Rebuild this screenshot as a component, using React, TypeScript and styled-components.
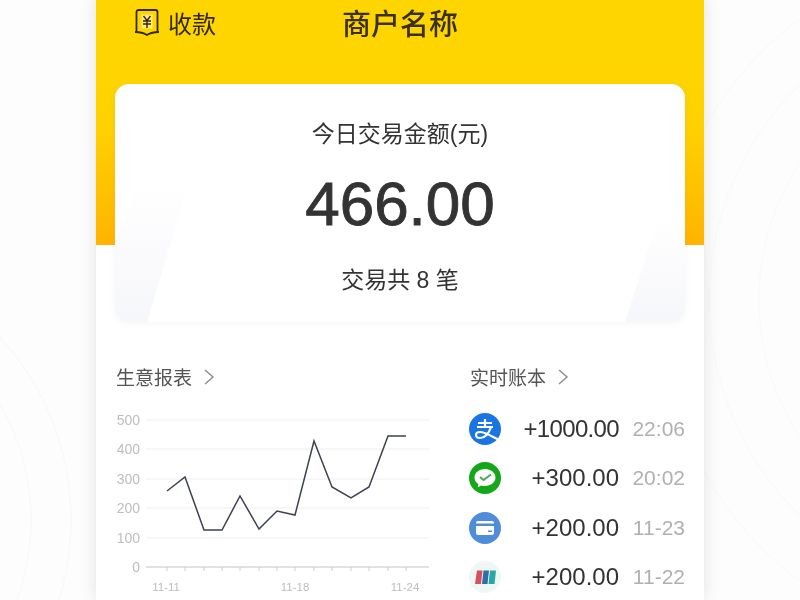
import React from 'react';
import styled, { createGlobalStyle } from 'styled-components';

const GlobalStyle = createGlobalStyle`
  html, body {
    margin: 0;
    padding: 0;
    width: 800px;
    height: 600px;
    overflow: hidden;
  }
  body {
    font-family: "Liberation Sans", "Noto Sans CJK SC", sans-serif;
    background:
      radial-gradient(circle at 1010px 300px, transparent 0 250px, #fafafb 250.500px 251.500px, transparent 252px 300px, #fafafb 300.500px 301.500px, transparent 302px 350px, #fafafb 350.500px 351.500px, transparent 352px),
      radial-gradient(circle at -200px 520px, transparent 0 230px, #f9f9fa 230.500px 231.500px, transparent 232px 270px, #f9f9fa 270.500px 271.500px, transparent 272px),
      #fdfdfd;
  }
`;

const Phone = styled.div`
  width: 608px;
  height: 600px;
  margin-left: 96px;
  background: #fff;
  overflow: hidden;
  box-shadow: 0 0 16px rgba(60, 60, 80, 0.14);
  filter: blur(0.6px);
`;

const Hero = styled.section`
  background: linear-gradient(180deg, #ffd500 0, #ffd500 70px, #ffd000 130px, #ffb400 245px) top / 100% 245px no-repeat;
  padding-bottom: 20px;
`;

const TopBar = styled.header`
  display: grid;
  grid-template-columns: 1fr auto 1fr;
  align-items: center;
  height: 44px;
  padding: 0 38px;
  margin-bottom: 40px;
  color: #33291a;
`;

const Collect = styled.div`
  display: flex;
  align-items: center;
  gap: 8px;
  font-size: 24px;
`;

const Title = styled.h1`
  margin: 0;
  font-size: 29px;
  font-weight: 500;
  color: #3a3020;
`;

const Card = styled.div`
  position: relative;
  margin: 0 19px;
  height: 238px;
  border-radius: 14px;
  background: #fff;
  box-shadow: 0 1px 6px rgba(120, 120, 140, 0.07);
  overflow: hidden;
  display: flex;
  flex-direction: column;
  align-items: center;
  color: #333;

  &::before,
  &::after {
    content: '';
    position: absolute;
    background: linear-gradient(0deg, #f6f7fa 0, #fbfbfd 55%, #fff 95%);
  }
  &::before {
    left: 0;
    bottom: 0;
    width: 75px;
    height: 145px;
    clip-path: polygon(33% 0, 100% 0, 43% 100%, 0 100%, 0 45%);
  }
  &::after {
    right: 0;
    bottom: 0;
    width: 60px;
    height: 108px;
    clip-path: polygon(58% 0, 100% 15%, 100% 100%, 0 100%);
  }
`;

const CardLabel = styled.div<{ $top: number }>`
  position: relative;
  z-index: 1;
  margin-top: ${p => p.$top}px;
  font-size: 23px;
  line-height: 30px;
`;

const Amount = styled.div`
  position: relative;
  z-index: 1;
  margin-top: 24px;
  font-size: 62px;
  line-height: 62px;
  -webkit-text-stroke: 0.9px #333;
`;

const Lower = styled.section`
  display: grid;
  grid-template-columns: 354px 1fr;
  padding: 21px 19px 0 20px;
`;

const SectionTitle = styled.div`
  display: flex;
  align-items: center;
  gap: 11px;
  height: 26px;
  font-size: 19px;
  color: #555;
`;

const ChevronMark = styled.svg`
  margin-top: 2px;
`;

const ChartWrap = styled.div`
  margin-top: 16px;
`;

const AxisText = styled.text<{ $small?: boolean }>`
  font-family: "Liberation Sans", sans-serif;
  font-size: ${p => (p.$small ? 11.5 : 14)}px;
  fill: #bdbdbd;
`;

const Ledger = styled.div`
  display: flex;
  flex-direction: column;
  gap: 17.3px;
  margin-top: 24px;
`;

const Row = styled.div`
  display: grid;
  grid-template-columns: 32px 1fr 53px;
  align-items: center;
  column-gap: 13px;
  height: 32px;
  margin-left: -1px;
`;

const Money = styled.span<{ $tight?: boolean }>`
  text-align: right;
  font-size: 24px;
  color: #333;
  letter-spacing: ${p => (p.$tight ? '-0.65px' : '0')};
`;

const When = styled.span`
  text-align: right;
  font-size: 21px;
  color: #b0b0b0;
  white-space: nowrap;
`;

const Chevron = () => (
  <ChevronMark width="12" height="18" viewBox="0 0 12 18" fill="none">
    <path d="M2 2l8 7-8 7" stroke="#8f8f8f" strokeWidth="1.5" />
  </ChevronMark>
);

const ReceiptIcon = () => (
  <svg width="26" height="27" viewBox="0 0 26 27" fill="none" stroke="#33291a" strokeWidth="1.800">
    <path d="M2.500 23V3a2 2 0 0 1 2-2h17a2 2 0 0 1 2 2v20" />
    <path d="M1 23c5 0 8.500.8 12 3 3.500-2.200 7-3 12-3" />
    <rect x="7.500" y="5.500" width="11" height="14" fill="#ffe97a" stroke="none" />
    <path d="M9.500 7l3.500 4.500L16.500 7M9 12h8M9 15h8M13 11.500V19" strokeWidth="1.400" />
  </svg>
);

const AlipayIcon = () => (
  <svg width="32" height="32" viewBox="0 0 32 32">
    <circle cx="16" cy="16" r="16" fill="#1b74e4" />
    <g fill="none" stroke="#fff" strokeWidth="2.200">
      <path d="M9 10h14M16 6v7M8 14h16" />
      <path d="M22 14c-2 6-6 11-11 11-3 0-4-1.500-4-3 0-2 2-3 4-3 5 0 11 4 19 8" />
    </g>
  </svg>
);

const WechatIcon = () => (
  <svg width="32" height="32" viewBox="0 0 32 32">
    <circle cx="16" cy="16" r="16" fill="#12a81a" />
    <path d="M16 7c-6 0-10.500 3.800-10.500 8.500 0 2.700 1.500 5 3.800 6.500l-.5 3.200 3.300-1.800c1.200.4 2.500.6 3.900.6 6 0 10.500-3.800 10.500-8.500S22 7 16 7z" fill="#fff" />
    <path d="M11 15l3.500 3L22 12.500" fill="none" stroke="#4fa65a" strokeWidth="2" />
  </svg>
);

const BankIcon = () => (
  <svg width="32" height="32" viewBox="0 0 32 32">
    <circle cx="16" cy="16" r="16" fill="#4f8cd9" />
    <rect x="7" y="9" width="18" height="14" rx="2" fill="#fff" />
    <rect x="7" y="11.500" width="18" height="2.500" fill="#4f8cd9" />
    <rect x="19" y="18.500" width="4" height="1.500" fill="#4f8cd9" />
  </svg>
);

const UnionIcon = () => (
  <svg width="32" height="32" viewBox="0 0 32 32">
    <circle cx="16" cy="16" r="16" fill="#eef6f6" />
    <path d="M8 9.500h5.500L12 23H6z" fill="#d9505a" />
    <path d="M14.500 9.500H20L18.500 23h-5.500z" fill="#2f6fa8" />
    <path d="M21 9.500h6L25.500 23h-6z" fill="#2aa8a8" />
  </svg>
);

const gridRows = [
  { label: '500', y: 15 },
  { label: '400', y: 44 },
  { label: '300', y: 74 },
  { label: '200', y: 103 },
  { label: '100', y: 133 },
];

const series = [
  [51, 86], [69, 72], [88, 125], [106, 125], [124, 91], [143, 124], [161, 106],
  [179, 110], [198, 36], [216, 82], [235, 93], [253, 82], [272, 31], [290, 31],
];

const tickXs = [51, 69, 88, 106, 124, 143, 161, 179, 198, 216, 235, 253, 272, 290];

const TrendChart = () => (
  <svg width="334" height="195" viewBox="0 0 334 195">
    {gridRows.map(row => (
      <g key={row.label}>
        <line x1="30" x2="313" y1={row.y} y2={row.y} stroke="#eeeeee" strokeWidth="1" />
        <AxisText x="24" y={row.y + 5} textAnchor="end">{row.label}</AxisText>
      </g>
    ))}
    <line x1="30" x2="313" y1="162" y2="162" stroke="#c4c4c4" strokeWidth="1" />
    <AxisText x="24" y="167" textAnchor="end">0</AxisText>
    {tickXs.map(x => (
      <line key={x} x1={x} x2={x} y1="162" y2="166" stroke="#cccccc" strokeWidth="1" />
    ))}
    <polyline points={series.map(p => p.join(',')).join(' ')} fill="none" stroke="#3d4250" strokeWidth="1.500" />
    <AxisText $small x="50" y="186" textAnchor="middle">11-11</AxisText>
    <AxisText $small x="179" y="186" textAnchor="middle">11-18</AxisText>
    <AxisText $small x="289" y="186" textAnchor="middle">11-24</AxisText>
  </svg>
);

const entries = [
  { icon: <AlipayIcon />, money: '+1000.00', when: '22:06', tight: true },
  { icon: <WechatIcon />, money: '+300.00', when: '20:02' },
  { icon: <BankIcon />, money: '+200.00', when: '11-23' },
  { icon: <UnionIcon />, money: '+200.00', when: '11-22' },
];

export default function App() {
  return (
    <>
      <GlobalStyle />
      <Phone>
        <Hero>
          <TopBar>
            <Collect>
              <ReceiptIcon />
              收款
            </Collect>
            <Title>商户名称</Title>
            <span />
          </TopBar>
          <Card>
            <CardLabel $top={35}>今日交易金额(元)</CardLabel>
            <Amount>466.00</Amount>
            <CardLabel $top={30}>交易共 8 笔</CardLabel>
          </Card>
        </Hero>
        <Lower>
          <div>
            <SectionTitle>生意报表 <Chevron /></SectionTitle>
            <ChartWrap>
              <TrendChart />
            </ChartWrap>
          </div>
          <div>
            <SectionTitle>实时账本 <Chevron /></SectionTitle>
            <Ledger>
              {entries.map(entry => (
                <Row key={entry.when}>
                  {entry.icon}
                  <Money $tight={entry.tight}>{entry.money}</Money>
                  <When>{entry.when}</When>
                </Row>
              ))}
            </Ledger>
          </div>
        </Lower>
      </Phone>
    </>
  );
}
